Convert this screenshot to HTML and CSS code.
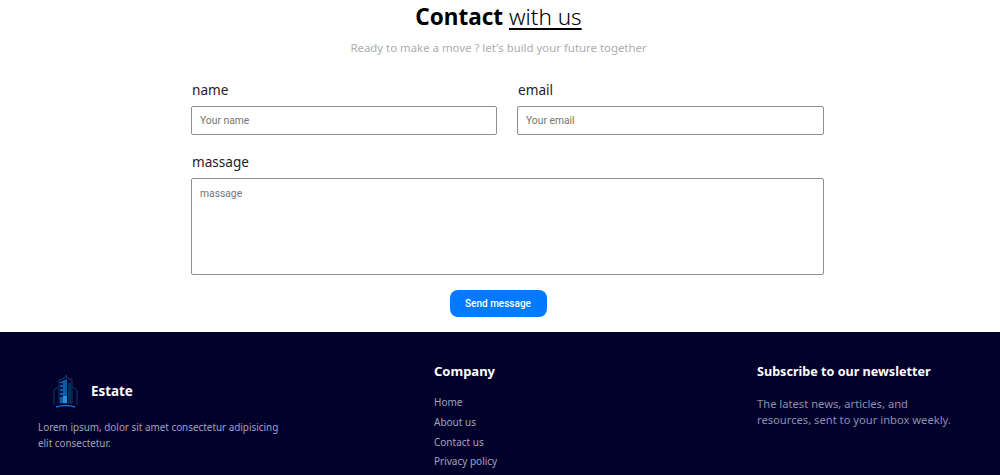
FILE: index.html
```html
<!DOCTYPE html>
<html lang="en">
<head>
    <meta charset="UTF-8">
    <meta name="viewport" content="width=device-width, initial-scale=1.0">
    <title>Contact with us</title>
    <link rel="stylesheet" href="styles.css">
</head>
<body>
    <section class="contact">
        <h1 class="contact-title"><strong>Contact</strong> <span>with us</span></h1>
        <p class="contact-sub">Ready to make a move ? let's build your future together</p>

        <form class="contact-form">
            <div class="form-row">
                <div class="form-field">
                    <label for="name">name</label>
                    <input id="name" type="text" placeholder="Your name">
                </div>
                <div class="form-field">
                    <label for="email">email</label>
                    <input id="email" type="text" placeholder="Your email">
                </div>
            </div>
            <div class="form-field">
                <label for="massage">massage</label>
                <textarea id="massage" placeholder="massage"></textarea>
            </div>
            <div class="form-actions">
                <button type="button" class="send-button">Send message</button>
            </div>
        </form>
    </section>

    <footer class="footer">
        <div class="footer-about">
            <div class="footer-brand">
                <svg class="brand-logo" viewBox="0 0 25 36" width="25" height="36">
                    <path d="M1 31V17q0-2 3-3l2-1M24 31V17q0-2-3-3l-2-1" fill="none" stroke="#0e3a6e" stroke-width="1"/>
                    <path d="M6 29V6l6-2 1-3 1 3 5 2v23z" fill="none" stroke="#0e3a6e" stroke-width="1"/>
                    <path d="M7 29V8l7-3v24z" fill="#0f5aa6"/>
                    <path d="M7 9h3v2H7zM7 13h3v2H7zM7 17h3v2H7zM7 21h3v2H7z" fill="#03123f"/>
                    <path d="M10 29v-7h4v7z" fill="#2a8fe0"/>
                    <path d="M15 9h3v20h-3z" fill="#0a2c5c"/>
                    <path d="M3 33q10-3 19 0" fill="none" stroke="#1a6fc4" stroke-width="1.500"/>
                </svg>
                <span class="brand-name">Estate</span>
            </div>
            <p class="footer-text">Lorem ipsum, dolor sit amet consectetur adipisicing elit consectetur.</p>
        </div>
        <div class="footer-company">
            <h3>Company</h3>
            <ul class="footer-links">
                <li>Home</li>
                <li>About us</li>
                <li>Contact us</li>
                <li>Privacy policy</li>
            </ul>
        </div>
        <div class="footer-news">
            <h3>Subscribe to our newsletter</h3>
            <p>The latest news, articles, and resources, sent to your inbox weekly.</p>
        </div>
    </footer>
</body>
</html>
```

FILE: styles.css
```css
* {
    margin: 0;
    padding: 0;
    box-sizing: border-box;
}

body {
    background-color: white;
    font-family: 'Noto Sans', 'Open Sans', sans-serif;
    color: #111;
}

.contact {
    height: 332px;
}

.contact-title {
    padding-right: 3px;
    text-align: center;
    font-size: 22.500px;
    line-height: 33px;
    font-weight: 300;
    color: #000;
}

.contact-title strong {
    font-weight: 700;
}

.contact-title span {
    text-decoration: underline;
    text-decoration-thickness: 1.500px;
    text-underline-offset: 3px;
    font-weight: 300;
}

.contact-sub {
    margin-top: 6px;
    padding-right: 3px;
    text-align: center;
    font-size: 11.400px;
    line-height: 18px;
    color: #adadad;
}

.contact-form {
    width: 633px;
    margin: 22px 0 0 191px;
}

.form-row {
    display: grid;
    grid-template-columns: 306px 307px;
    gap: 20px;
    margin-bottom: 16px;
}

.form-field label {
    display: block;
    margin-bottom: 6px;
    padding-left: 1px;
    font-size: 13.600px;
    line-height: 21px;
    color: #222;
}

.form-field input,
.form-field textarea {
    display: block;
    width: 100%;
    padding: 0 8px;
    border: 1px solid #8f8f8f;
    border-radius: 2px;
    font-family: 'Roboto', 'Liberation Sans', sans-serif;
    font-size: 10.300px;
    outline: none;
    resize: none;
}

.form-field input {
    height: 29px;
}

.form-field textarea {
    height: 97px;
    padding-top: 8px;
}

.form-field input::placeholder,
.form-field textarea::placeholder {
    color: #757575;
}

.form-actions {
    display: flex;
    justify-content: center;
    padding-right: 19px;
    margin-top: 15px;
}

.send-button {
    width: 97px;
    height: 27px;
    background-color: #007bff;
    color: white;
    border: none;
    border-radius: 8px;
    font-family: 'Roboto', 'Liberation Sans', sans-serif;
    font-size: 10px;
    font-weight: 500;
}

.footer {
    display: grid;
    grid-template-columns: 396px 323px 1fr;
    height: 143px;
    padding: 29px 40px 0 38px;
    background-color: #01012b;
    color: #a3a3bd;
}

.footer-about {
    padding-top: 13px;
}

.footer-brand {
    display: flex;
    align-items: center;
    gap: 13px;
    padding-left: 15px;
}

.brand-name {
    font-size: 13.400px;
    font-weight: 700;
    color: white;
    margin-bottom: 2px;
}

.footer-text {
    width: 250px;
    margin-top: 9px;
    font-size: 9.900px;
    line-height: 16px;
}

.footer h3 {
    font-size: 13px;
    line-height: 20px;
    font-weight: 700;
    color: white;
}

.footer-news {
    padding-top: 1px;
}

.footer-news h3 {
    font-size: 12.600px;
}

.footer-links {
    list-style-type: none;
    margin-top: 14px;
    font-size: 10px;
    line-height: 14px;
}

.footer-links li {
    margin-bottom: 5.800px;
}

.footer-news p {
    margin-top: 14px;
    font-size: 11.200px;
    line-height: 16px;
    width: 205px;
    color: #8f8fab;
}
```
